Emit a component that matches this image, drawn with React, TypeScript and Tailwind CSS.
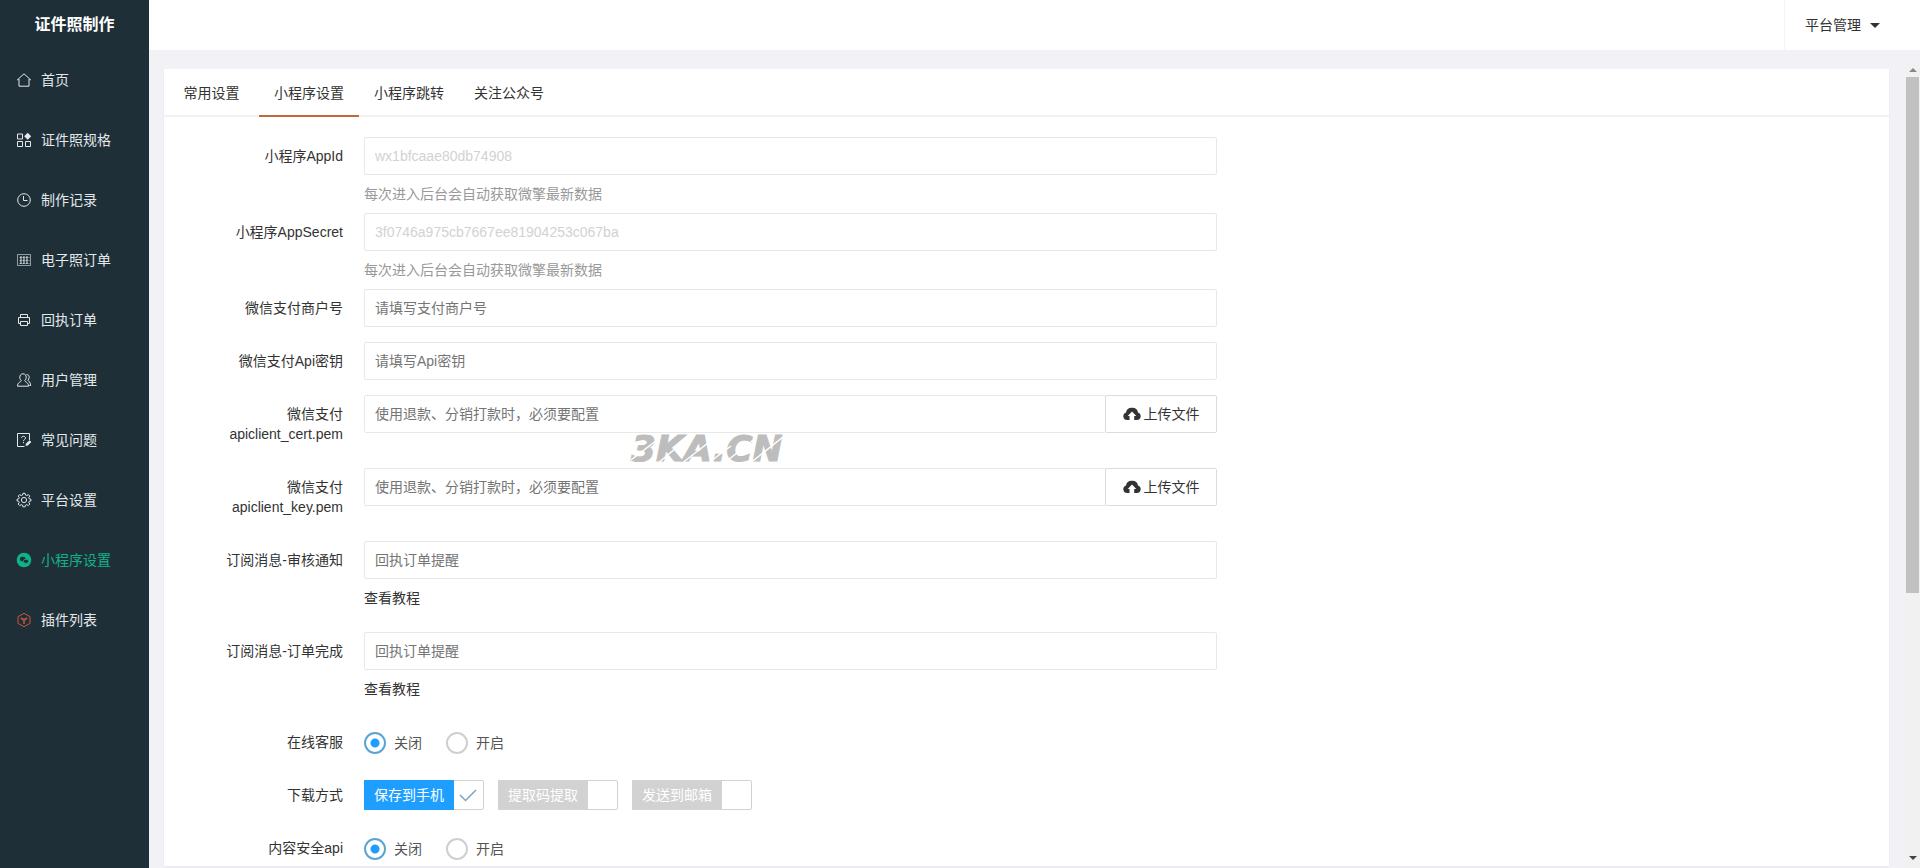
import React, { useState } from 'react';

type IconProps = { children: React.ReactNode };

const Icon = ({ children }: IconProps) => (
  <svg
    viewBox="0 0 16 16"
    className="w-4 h-4 shrink-0"
    fill="none"
    stroke="currentColor"
    strokeWidth="1"
    aria-hidden="true"
  >
    {children}
  </svg>
);

const menu = [
  {
    name: '首页',
    icon: (
      <Icon>
        <path d="M1 8.2 8 1.8l7 6.4M3 7v7.2h10V7" />
      </Icon>
    ),
  },
  {
    name: '证件照规格',
    icon: (
      <Icon>
        <path d="M1.500 2h5v5h-5zM1.500 9.500h5v5h-5zM9.500 9.500h5v5h-5z" />
        <path d="m11.700.8 3.500 3.500-3.500 3.500-3.500-3.500z" fill="currentColor" stroke="none" />
      </Icon>
    ),
  },
  {
    name: '制作记录',
    icon: (
      <Icon>
        <circle cx="8" cy="8" r="6.3" />
        <path d="M7.500 4v4.500h4" />
      </Icon>
    ),
  },
  {
    name: '电子照订单',
    icon: (
      <Icon>
        <path d="M1.500 2.500h13v11h-13z" opacity="0.6" />
        <path d="M3.500 5.500h2m1 0h2m1 0h2m1 0h1M3.500 8.500h2m1 0h2m1 0h2m1 0h1M3.500 11.500h2m1 0h2m1 0h2m1 0h1" opacity="0.7" />
        <path d="M5 4v8M8 4v8M11 4v8" />
      </Icon>
    ),
  },
  {
    name: '回执订单',
    icon: (
      <Icon>
        <path d="M4.500 5.500v-3h7v3M4.500 11.500h-2v-6h11v6h-2M4.500 9.500h7v4h-7z" />
      </Icon>
    ),
  },
  {
    name: '用户管理',
    icon: (
      <Icon>
        <path d="M7 1.800a3.200 3.200 0 0 1 3.200 3.500c0 1.600-.8 2.700-1.500 3.400.3 1.300 3.800 1.500 3.800 5.500h-11c0-4 3.500-4.200 3.800-5.500C4.600 8 3.800 6.900 3.800 5.300A3.200 3.200 0 0 1 7 1.800z" />
        <path d="M10.500 2.500c1.700 0 2.700 1.200 2.700 2.800 0 1.400-.8 2.300-1.300 2.900.4 1 2.800 1.800 2.800 5.300h-1.500" />
      </Icon>
    ),
  },
  {
    name: '常见问题',
    icon: (
      <Icon>
        <path d="M8.500 14.500h-7v-13h12V8" />
        <path d="M5.500 6c0-2.400 4-2.200 4 0 0 1.400-2 1.400-2 3M7.500 10v1.200" />
        <path d="m9.500 14 .5-2.400 3.500-3.400 1.900 1.800-3.500 3.500z" fill="currentColor" stroke="none" />
      </Icon>
    ),
  },
  {
    name: '平台设置',
    icon: (
      <Icon>
        <path d="m6.900 1.300-.4 1.800-1.200.5-1.600-1-1.500 1.500 1 1.600-.5 1.200-1.700.4v1.600l1.700.4.5 1.200-1 1.600 1.500 1.500 1.600-1 1.200.5.400 1.700h2.200l.4-1.700 1.200-.5 1.600 1 1.500-1.500-1-1.600.5-1.200 1.700-.4V7.300l-1.700-.4-.5-1.200 1-1.600-1.500-1.500-1.600 1-1.200-.5-.4-1.800z" />
        <circle cx="8" cy="8" r="2.600" />
      </Icon>
    ),
  },
  {
    name: '小程序设置',
    icon: (
      <Icon>
        <circle cx="8" cy="8" r="7.300" fill="currentColor" stroke="none" />
        <ellipse cx="6.700" cy="7" rx="2.900" ry="2.300" fill="#1f2f38" stroke="none" />
        <ellipse cx="10" cy="9.300" rx="2.700" ry="2.100" fill="#1f2f38" stroke="#10b288" strokeWidth="0.8" />
      </Icon>
    ),
  },
  {
    name: '插件列表',
    icon: (
      <Icon>
        <g stroke="#c9553c">
          <path d="M8 1.300 14 4.600v6.800l-6 3.300-6-3.300V4.600z" />
          <path d="M4.800 6 8 8l3.200-2M8 8v4" strokeWidth="1.500" />
        </g>
      </Icon>
    ),
  },
];

const tabs = ['常用设置', '小程序设置', '小程序跳转', '关注公众号'];

const inputClass =
  'block w-full h-[38px] px-[10px] border border-[#e8e8e8] rounded-xs bg-white text-sm text-[#555] placeholder:text-[#757575] disabled:text-[#d2d2d2] outline-none';

const labelClass = 'w-[200px] shrink-0 pl-8 pr-[21px] py-[9px] text-right leading-5';

type FieldProps = {
  id: string;
  label: React.ReactNode;
  placeholder?: string;
  value?: string;
  hint?: string;
  link?: string;
  upload?: boolean;
};

const Field = ({ id, label, placeholder, value, hint, link, upload }: FieldProps) => (
  <div className={hint ? 'flex' : 'flex mb-[15px]'}>
    <label htmlFor={id} className={labelClass}>
      {label}
    </label>
    <div className="flex-1 min-w-0">
      <div className="flex">
        <input
          id={id}
          type="text"
          className={inputClass}
          placeholder={placeholder}
          defaultValue={value}
          disabled={value !== undefined}
        />
        {upload && (
          <button
            type="button"
            className="flex items-center justify-center gap-[3px] w-28 h-[38px] shrink-0 -ml-px border border-[#dcdcdc] rounded-xs bg-white"
          >
            <svg viewBox="0 0 18 14" className="w-[18px] h-[14px]" fill="#333" aria-hidden="true">
              <path d="M6.500 13H4.200A3.900 3.900 0 0 1 3 5.400 5.800 5.800 0 0 1 9 .8a5.800 5.800 0 0 1 6 4.600A3.900 3.900 0 0 1 13.800 13h-2.600V9h2.100L9 4.500 4.700 9h1.800z" />
            </svg>
            上传文件
          </button>
        )}
      </div>
      {hint && <p className="py-[9px] leading-5 text-[#999]">{hint}</p>}
      {link && (
        <p className="py-[9px] leading-5">
          <a href="#tutorial">{link}</a>
        </p>
      )}
    </div>
  </div>
);

const RadioField = ({ name, label }: { name: string; label: string }) => (
  <fieldset className="flex mb-[15px]">
    <legend className={`${labelClass} float-left`}>{label}</legend>
    <div className="flex items-center h-10 gap-6 -mb-[2px]">
      {['关闭', '开启'].map((text, i) => (
        <label key={text} className="flex items-center gap-2 text-[#555]">
          <input
            type="radio"
            name={name}
            defaultChecked={i === 0}
            className="appearance-none w-[22px] h-[22px] rounded-full border-2 border-[#cfcfcf] bg-white checked:border-[#5aa5d6] checked:bg-[radial-gradient(circle,#1e9fff_0_4px,#fff_5px)]"
          />
          {text}
        </label>
      ))}
    </div>
  </fieldset>
);

const DownloadOption = ({ text, checked }: { text: string; checked?: boolean }) => (
  <label className="group flex h-[30px] w-[120px] border border-[#d2d2d2] rounded-xs">
    <span className="flex items-center justify-center w-[90px] -my-px -ml-px bg-[#d2d2d2] text-white group-has-checked:bg-[#1e9fff]">
      {text}
    </span>
    <input type="checkbox" defaultChecked={checked} className="peer appearance-none flex-1 w-0 h-0" />
    <svg viewBox="0 0 29 28" className="hidden peer-checked:block w-[29px] h-7" fill="none" aria-hidden="true">
      <path d="m6 14 5.500 5.500L22 9" stroke="#7ba4c4" strokeWidth="1.500" />
    </svg>
  </label>
);

// Static scroll track on the right edge of the content area
const ScrollTrack = () => (
  <div className="flex flex-col w-[15px] shrink-0 bg-[#f1f1f1]" aria-hidden="true">
    <div className="flex items-center justify-center h-[15px]">
      <svg viewBox="0 0 8 4" className="w-2 h-1" fill="#888">
        <path d="M0 4 4 0l4 4z" />
      </svg>
    </div>
    <div className="flex-1 min-h-0 px-px">
      <div className="h-[67%] bg-[#c1c1c1]" />
    </div>
    <div className="flex items-center justify-center h-[21px]">
      <svg viewBox="0 0 8 4" className="w-2 h-1" fill="#444">
        <path d="m0 0 4 4 4-4z" />
      </svg>
    </div>
  </div>
);

const Watermark = () => (
  <div className="absolute left-[467px] top-[364px] pointer-events-none" aria-hidden="true">
    <span className="block font-['DejaVu_Sans',sans-serif] font-bold italic text-4xl leading-8 text-[#bdbdbd] [-webkit-text-stroke:1px_#bdbdbd]">
      3KA.CN
    </span>
    <svg viewBox="0 0 160 32" className="absolute inset-0 w-40 h-8" stroke="#fff" strokeWidth="1.500" fill="none">
      <path d="M0 27 30 4M26 31 58 4M50 31 86 3M76 31l24-18M92 31l34-27M118 31l34-27" />
    </svg>
  </div>
);

const App = () => {
  const [activeTab, setActiveTab] = useState('小程序设置');
  const [activeMenu, setActiveMenu] = useState('小程序设置');

  return (
    <div className="flex h-screen overflow-hidden bg-[#f1f1f6] font-['Liberation_Sans','Noto_Sans_CJK_SC',sans-serif] text-sm text-[#333]">
      <aside className="w-[149px] shrink-0 bg-[#1f2f38]">
        <h1 className="h-[50px] leading-[50px] text-center text-base font-bold text-white">证件照制作</h1>
        <nav>
          {menu.map((item) => (
            <a
              key={item.name}
              href="#menu"
              onClick={() => setActiveMenu(item.name)}
              className={`flex items-center gap-[9px] h-[60px] pl-4 ${
                activeMenu === item.name ? 'text-[#10b288]' : 'text-[#e3e8ea]'
              }`}
            >
              {item.icon}
              {item.name}
            </a>
          ))}
        </nav>
      </aside>

      <div className="flex flex-col flex-1 min-w-0">
        <header className="flex justify-end h-[50px] shrink-0 bg-white">
          <button type="button" className="flex items-center gap-[9px] pl-5 pr-10 border-l border-[#f4f4f4]">
            平台管理
            <svg viewBox="0 0 10 5" className="w-[10px] h-[5px]" fill="#333" aria-hidden="true">
              <path d="M0 0h10L5 5z" />
            </svg>
          </button>
        </header>

        <div className="flex flex-1 min-h-0 pt-3">
          <main className="flex flex-1 min-w-0 pl-[15px] pr-4 pt-[7px] pb-[2px]">
            <div className="relative flex-1 min-w-0 bg-white overflow-hidden shadow-xs">
              <div role="tablist" className="flex h-12 pl-1 border-b-2 border-[#f2f2f2]">
                {tabs.map((tab, i) => (
                  <button
                    key={tab}
                    type="button"
                    role="tab"
                    aria-selected={activeTab === tab}
                    onClick={() => setActiveTab(tab)}
                    className={`h-12 pt-[2px] border-b-2 ${i === 0 ? 'w-[91px] pr-1' : 'w-[100px]'} ${
                      activeTab === tab ? 'border-[#c4683c]' : 'border-transparent'
                    }`}
                  >
                    {tab}
                  </button>
                ))}
              </div>

              <form className="w-full max-w-[1053px] pt-5">
                <Field id="appid" label="小程序AppId" value="wx1bfcaae80db74908" hint="每次进入后台会自动获取微擎最新数据" />
                <Field
                  id="secret"
                  label="小程序AppSecret"
                  value="3f0746a975cb7667ee81904253c067ba"
                  hint="每次进入后台会自动获取微擎最新数据"
                />
                <Field id="mchid" label="微信支付商户号" placeholder="请填写支付商户号" />
                <Field id="apikey" label="微信支付Api密钥" placeholder="请填写Api密钥" />
                <Field
                  id="cert"
                  label={<>微信支付<br />apiclient_cert.pem</>}
                  placeholder="使用退款、分销打款时，必须要配置"
                  upload
                />
                <Field
                  id="key"
                  label={<>微信支付<br />apiclient_key.pem</>}
                  placeholder="使用退款、分销打款时，必须要配置"
                  upload
                />
                <Field id="audit" label="订阅消息-审核通知" placeholder="回执订单提醒" link="查看教程" />
                <Field id="done" label="订阅消息-订单完成" placeholder="回执订单提醒" link="查看教程" />
                <RadioField name="service" label="在线客服" />
                <fieldset className="flex mb-[15px]">
                  <legend className={`${labelClass} float-left`}>下载方式</legend>
                  <div className="flex items-center h-[38px] gap-[14px]">
                    <DownloadOption text="保存到手机" checked />
                    <DownloadOption text="提取码提取" />
                    <DownloadOption text="发送到邮箱" />
                  </div>
                </fieldset>
                <RadioField name="safe" label="内容安全api" />
              </form>

              <Watermark />
            </div>
          </main>
          <ScrollTrack />
        </div>
      </div>
    </div>
  );
};

export default App;
